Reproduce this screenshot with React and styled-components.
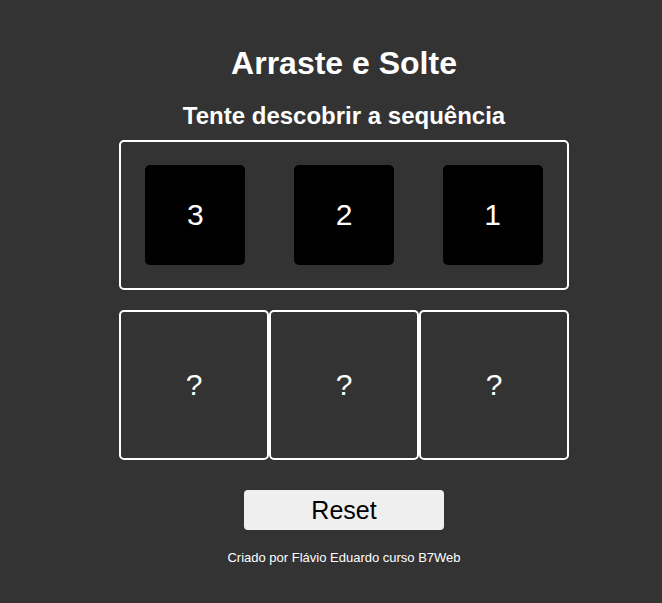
import React, { useState } from 'react'
import styled, { createGlobalStyle } from 'styled-components'

const GlobalStyle = createGlobalStyle`
  html, body {
    margin: 0;
    padding: 0;
    background-color: #333333;
    font-family: "Liberation Sans", Arial, sans-serif;
    color: #ffffff;
  }
  body {
    padding-left: 26px;
  }
`

const Page = styled.div`
  width: 450px;
  margin: 0 auto;
  padding-top: 45px;
  display: flex;
  flex-direction: column;
  align-items: center;
`

const Title = styled.h1`
  margin: 0;
  font-size: 32px;
  line-height: 37px;
  font-weight: bold;
`

const Subtitle = styled.h2`
  margin: 20px 0 10px;
  font-size: 24px;
  line-height: 28px;
  font-weight: bold;
`

const Neutral = styled.div`
  box-sizing: border-box;
  width: 450px;
  height: 150px;
  border: 2px solid #ffffff;
  border-radius: 5px;
  display: flex;
  align-items: center;
  justify-content: space-around;
`

const Item = styled.div`
  width: 100px;
  height: 100px;
  background-color: #000000;
  border-radius: 5px;
  display: flex;
  align-items: center;
  justify-content: center;
  font-size: 30px;
  cursor: move;
`

const Areas = styled.div`
  width: 450px;
  margin-top: 20px;
  display: flex;
`

const Area = styled.div`
  box-sizing: border-box;
  width: 150px;
  height: 150px;
  border: 2px solid #ffffff;
  border-radius: 5px;
  display: flex;
  align-items: center;
  justify-content: center;
  font-size: 30px;
`

const ResetButton = styled.button`
  margin-top: 30px;
  width: 200px;
  height: 40px;
  border: 0;
  border-radius: 4px;
  background-color: #efefef;
  color: #000000;
  font-family: "Liberation Sans", Arial, sans-serif;
  font-size: 25px;
  cursor: pointer;
`

const Footer = styled.p`
  margin: 20px 0 0;
  font-size: 13px;
`

export default function App() {
  const [items] = useState(['3', '2', '1'])

  return (
    <>
      <GlobalStyle />
      <Page>
        <Title>Arraste e Solte</Title>
        <Subtitle>Tente descobrir a sequência</Subtitle>
        <Neutral>
          {items.map(i => <Item key={i} draggable>{i}</Item>)}
        </Neutral>
        <Areas>
          {[0, 1, 2].map(i => <Area key={i}>?</Area>)}
        </Areas>
        <ResetButton>Reset</ResetButton>
        <Footer>Criado por Flávio Eduardo curso B7Web</Footer>
      </Page>
    </>
  )
}
